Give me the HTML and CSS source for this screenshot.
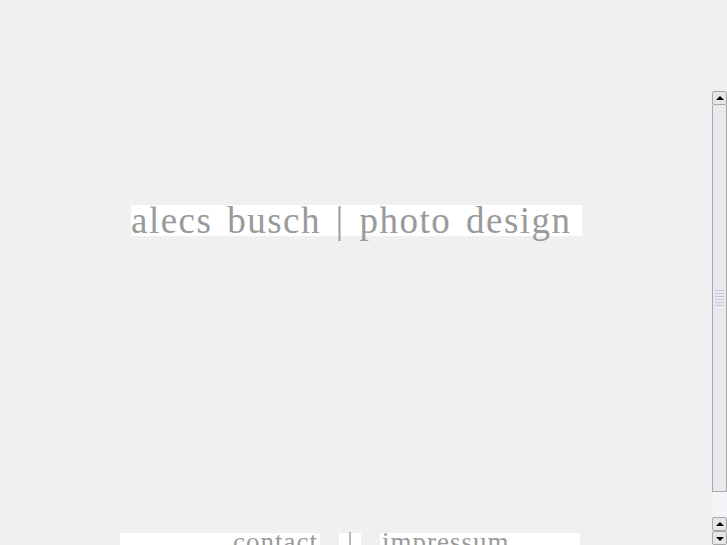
FILE: index.html
```html
<!DOCTYPE html>
<html>

	<head>
		<meta charset="utf-8" />
		<title>alecs busch | photo design</title>
		<link rel="stylesheet" href="styles.css">
	</head>

	<body>
		<div id="page">
			<div id="stage">
				<div id="logo">alecs busch | photo design</div>

				<div id="nav">
					<a class="cell left" href="#">contact</a>
					<span class="cell sep">|</span>
					<a class="cell right" href="#">impressum</a>
				</div>
			</div>

			<!-- scroller of the side frame -->
			<div id="scroller">
				<div class="btn up"></div>
				<div class="thumb"><span class="grip"></span></div>
				<div class="track"></div>
				<div class="btn up"></div>
				<div class="btn down"></div>
			</div>
		</div>
	</body>

</html>
```

FILE: styles.css
```css
html,
body {
	margin: 0;
	height: 545px;
	overflow: hidden;
	background: #f0f0f0;
}

#page {
	display: flex;
	height: 545px;
}

#stage {
	flex: 1;
	display: flex;
	flex-direction: column;
	align-items: flex-start;
	padding-top: 205px;
	font-family: "Liberation Serif", "DejaVu Serif", serif;
	color: #9a9a9a;
}

#logo {
	margin-left: 131px;
	width: 451px;
	height: 33px;
	background: #fff;
	font-size: 37px;
	line-height: 31px;
	white-space: nowrap;
	letter-spacing: 1.5px;
	word-spacing: 4px;
}

#nav {
	display: flex;
	gap: 19px;
	margin-top: 297px;
	margin-left: 120px;
	font-size: 27px;
	line-height: 19px;
	letter-spacing: 1px;
}

.cell {
	display: block;
	height: 30px;
	box-sizing: border-box;
	background: #fff;
	color: #9a9a9a;
	text-decoration: none;
}

.left {
	width: 200px;
	text-align: right;
	padding-right: 2px;
}

.sep {
	width: 22px;
	text-align: center;
	letter-spacing: 0;
}

.right {
	width: 200px;
	padding-left: 2px;
}

#scroller {
	width: 15px;
	margin-top: 91px;
	display: flex;
	flex-direction: column;
}

.btn {
	height: 14px;
	box-sizing: border-box;
	border: 1px solid #a8a8a8;
	border-radius: 2px;
	background: #e6e6ea;
	position: relative;
}

.btn::after {
	content: "";
	position: absolute;
	left: 3px;
	top: 4px;
	border-left: 4px solid transparent;
	border-right: 4px solid transparent;
}

.up::after {
	border-bottom: 4px solid #000;
}

.down::after {
	top: 5px;
	border-top: 4px solid #000;
}

.thumb {
	height: 387px;
	box-sizing: border-box;
	border: 1px solid #a8a8a8;
	border-top: 0;
	background: #e9e9ef;
	display: flex;
	align-items: center;
	justify-content: center;
}

.grip {
	width: 9px;
	height: 16px;
	background: repeating-linear-gradient(0deg, #c8c8d0 0 1px, transparent 1px 3px);
}

.track {
	flex: 1;
	background: #f4f4f8;
}
```
